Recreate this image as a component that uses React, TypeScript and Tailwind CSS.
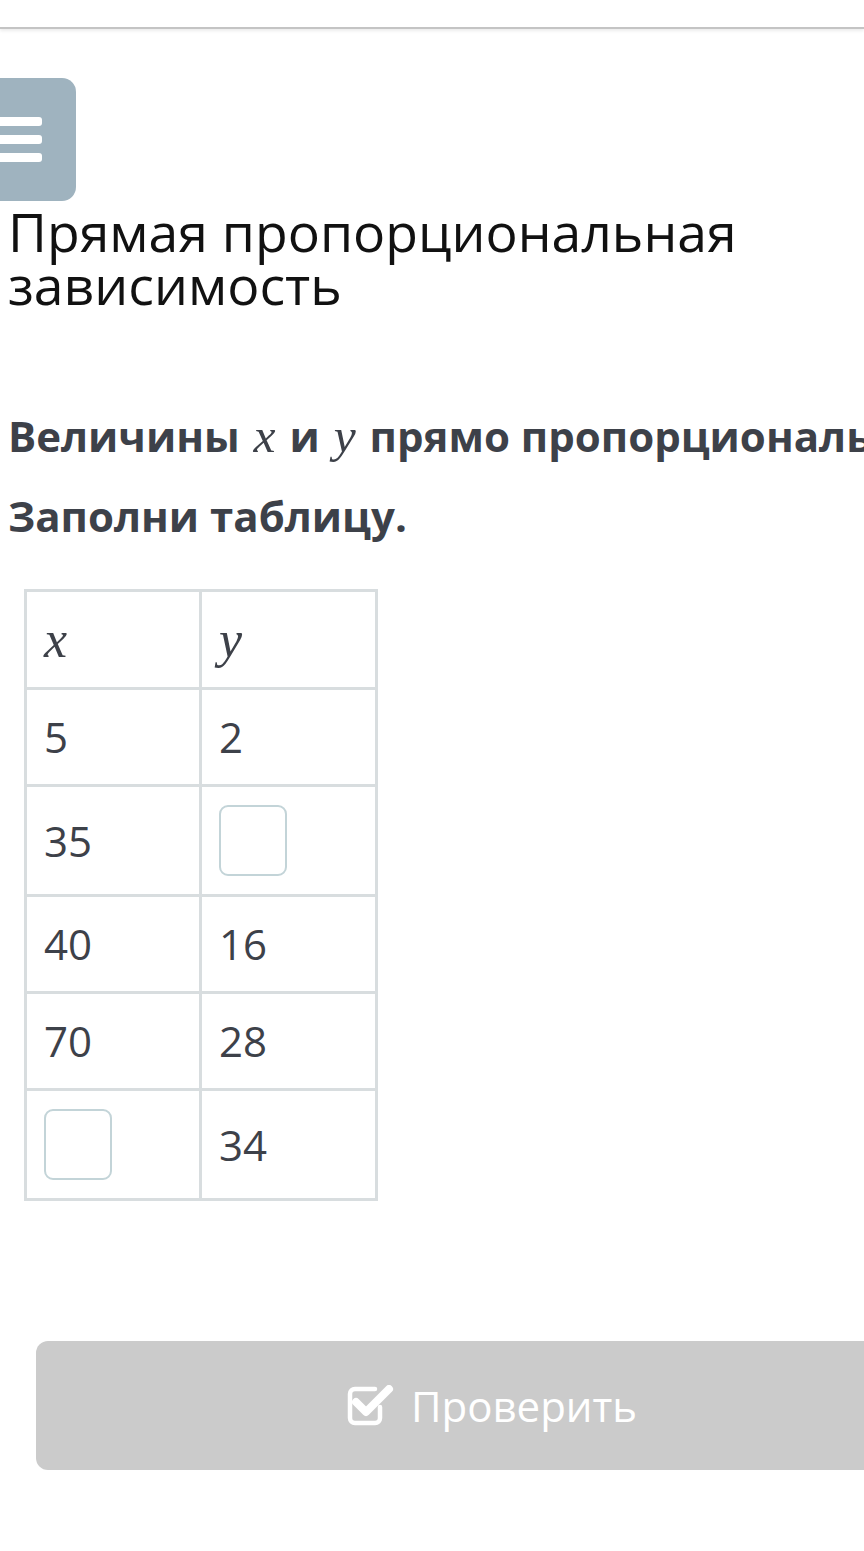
import React from 'react'

const mathFont = { fontFamily: '"Liberation Serif", "DejaVu Serif", serif' }

function MathVar({ v }: { v: string }) {
  return (
    <span className="mx-[3px] text-[1.18em] italic font-normal" style={mathFont}>
      {v}
    </span>
  )
}

function Blank() {
  return <div className="h-[71px] w-[68px] rounded-[9px] border-2 border-[#c3d4d8] bg-white" />
}

function CheckSquareIcon() {
  return (
    <svg width="48" height="42" viewBox="0 0 48 42" fill="none">
      <path
        d="M33 22 V33 a5 5 0 0 1 -5 5 H8 a5 5 0 0 1 -5 -5 V9 a5 5 0 0 1 5 -5 H28"
        stroke="white"
        strokeWidth="4.5"
        strokeLinecap="round"
      />
      <path
        d="M9 17 L19 27 L42 4"
        stroke="white"
        strokeWidth="8"
        strokeLinecap="round"
        strokeLinejoin="round"
      />
    </svg>
  )
}

const rows: [React.ReactNode, React.ReactNode][] = [
  ['5', '2'],
  ['35', <Blank />],
  ['40', '16'],
  ['70', '28'],
  [<Blank />, '34'],
]

export default function App() {
  return (
    <div
      className="relative min-h-[1551px] w-[864px] overflow-hidden bg-white"
      style={{ fontFamily: '"Open Sans", "Noto Sans", sans-serif' }}
    >
      {/* Top bar */}
      <div className="h-[29px] border-b-2 border-[#c4c4c4] shadow-[0_2px_3px_rgba(0,0,0,0.08)]" />

      {/* Menu button */}
      <div className="mt-[49px] ml-[-24px] flex h-[123px] w-[100px] flex-col justify-center gap-[9px] rounded-[14px] bg-[#9fb3bf] pl-[14px]">
        <div className="h-[9px] w-[52px] rounded-[3px] bg-white" />
        <div className="h-[9px] w-[52px] rounded-[3px] bg-white" />
        <div className="h-[9px] w-[52px] rounded-[3px] bg-white" />
      </div>

      {/* Title */}
      <h1 className="mt-[4px] pl-[8px] text-[53.5px] leading-[53px] font-normal text-[#111]">
        Прямая пропорциональная
        <br />
        зависимость
      </h1>

      {/* Task */}
      <div className="mt-[101px] pl-[8px] text-[42px] font-bold text-[#3d4149]">
        <p className="whitespace-nowrap leading-[48px]">
          Величины <MathVar v="x" /> и <MathVar v="y" /> прямо пропорциональны.
        </p>
        <p className="mt-[32px] leading-[48px]">Заполни таблицу.</p>
      </div>

      {/* Table */}
      <table className="mt-[49px] ml-[24px] border-collapse text-[42px] text-[#3d4149]">
        <thead>
          <tr>
            <th
              className="h-[98px] w-[175px] border-[3px] border-[#d8dddf] px-[17px] text-left align-middle text-[52px] font-normal italic"
              style={mathFont}
            >
              x
            </th>
            <th
              className="h-[98px] w-[176px] border-[3px] border-[#d8dddf] px-[17px] text-left align-middle text-[52px] font-normal italic"
              style={mathFont}
            >
              y
            </th>
          </tr>
        </thead>
        <tbody>
          {rows.map(([a, b], i) => {
            const tall = typeof a !== 'string' || typeof b !== 'string'
            return (
              <tr key={i} className={tall ? 'h-[110px]' : 'h-[97px]'}>
                <td className="border-[3px] border-[#d8dddf] px-[17px] align-middle leading-[56px]">{a}</td>
                <td className="border-[3px] border-[#d8dddf] px-[17px] align-middle leading-[56px]">{b}</td>
              </tr>
            )
          })}
        </tbody>
      </table>

      {/* Check button */}
      <div className="mt-[140px] ml-[36px] flex h-[129px] w-[912px] items-center justify-center gap-[16px] rounded-[12px] bg-[#cbcbcb] text-[42px] text-white">
        <CheckSquareIcon />
        <span>Проверить</span>
      </div>
    </div>
  )
}
